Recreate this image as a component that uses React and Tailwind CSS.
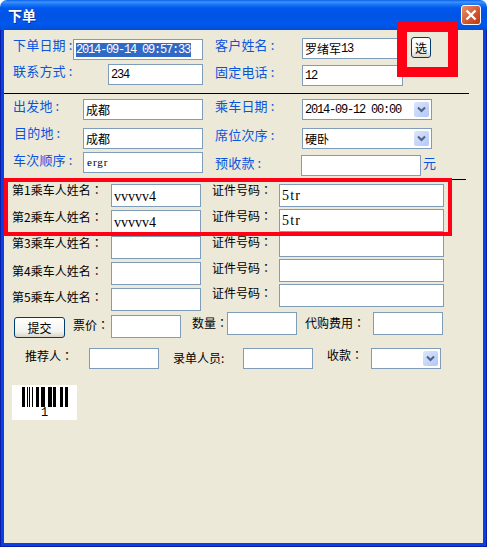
const cjk = "font-['Noto_Sans_CJK_SC','Noto_Sans_CJK_TC',sans-serif]";
const mono = "font-['Liberation_Mono','Noto_Sans_CJK_SC',monospace]";
const serif = "font-['Liberation_Serif','Noto_Sans_CJK_SC',serif]";

function Label({ children, className = "", colon = "：", blue = false }) {
  return (
    <div className={`shrink-0 whitespace-nowrap ${cjk} ${blue ? "text-[13px] text-[#0a55dc] tracking-[0.2px]" : "text-[12px] text-black"} leading-[16px] ${className}`}>
      {children}
      {blue ? (
        <span className="ml-[3px]">:</span>
      ) : (
        <span className="font-['Noto_Sans_CJK_TC',sans-serif]">{colon}</span>
      )}
    </div>
  );
}

function Box({ className = "", children }) {
  return (
    <div className={`shrink-0 bg-white border border-[#7f9db9] flex items-center pl-[2px] overflow-hidden whitespace-nowrap text-black ${className}`}>
      {children}
    </div>
  );
}

function Code({ children, className = "" }) {
  return <span className={`${mono} text-[12px] tracking-[-1.2px] ${className}`}>{children}</span>;
}

function Han({ children }) {
  return <span className={`${cjk} text-[12px]`}>{children}</span>;
}

function Select({ className = "", children }) {
  return (
    <Box className={`justify-between pr-[2px] ${className}`}>
      <span className="flex items-center">{children}</span>
      <div className="w-[15px] h-[15px] rounded-[2px] bg-[linear-gradient(135deg,#dce6fc,#b2c7f7)] flex items-center justify-center">
        <svg width="9" height="7" viewBox="0 0 9 7">
          <path d="M1 1.5 L4.5 5 L8 1.5" fill="none" stroke="#4d6185" strokeWidth="2" />
        </svg>
      </div>
    </Box>
  );
}

function XPButton({ className = "", children }) {
  return (
    <div className={`shrink-0 flex items-center justify-center border border-[#003c74] rounded-[3px] bg-[linear-gradient(180deg,#ffffff,#f4f3ee_70%,#d9d5c8)] ${cjk} text-[12px] text-black ${className}`}>
      {children}
    </div>
  );
}

const bars = [
  [0, 3], [5, 1], [7, 1], [10, 1], [14, 3], [19, 4], [26, 4], [31, 3], [38, 3], [43, 3],
];

const leftRows = [
  { n: 1, v: "vvvvv4", t: "-mt-[2px]" },
  { n: 2, v: "vvvvv4", t: "-mt-[1px]" },
  { n: 3, v: "", t: "-mt-[1px]" },
  { n: 4, v: "", t: "mt-[1px]" },
  { n: 5, v: "", t: "mt-[1px]" },
];
const rightRows = [
  { v: "5tr", t: "-mt-[2px]" },
  { v: "5tr", t: "-mt-[1px]" },
  { v: "", t: "mt-0" },
  { v: "", t: "mt-[1px]" },
  { v: "", t: "mt-[1px]" },
];

export default function App() {
  return (
    <div className="relative w-[487px] h-[547px] flex flex-col bg-white rounded-t-[7px] overflow-hidden">
      {/* title bar */}
      <div className="h-[30px] shrink-0 flex items-center justify-between pl-[8px] pr-[6px] bg-[linear-gradient(180deg,#0a5fe8_0px,#3d95ff_2px,#1f7bf5_4px,#0058ee_8px,#0054e3_16px,#0058f0_24px,#0050d8_29px)]">
        <span className={`${cjk} text-[14px] font-bold text-white [text-shadow:1px_1px_0_#0f2f8f]`}>下单</span>
        <div className="w-[20px] h-[20px] rounded-[3px] border border-white bg-[linear-gradient(135deg,#e8906c,#d2532c_60%,#bc3a12)] flex items-center justify-center">
          <svg width="12" height="12" viewBox="0 0 12 12">
            <path d="M1.5 1.5 L10.5 10.5 M10.5 1.5 L1.5 10.5" stroke="#fff" strokeWidth="2.4" />
          </svg>
        </div>
      </div>

      {/* frame + client */}
      <div className="flex-1 border-x border-b border-[#0a1fa8] flex flex-col">
        <div className="flex-1 border-x-[3px] border-b-[3px] border-[#0a3fe6] bg-[#ece9d8] flex flex-col">
          {/* row 1 */}
          <div className="flex items-start h-[34px] pl-[9px]">
            <Label blue className="w-[60px] mt-[7px]">下单日期</Label>
            <Box className="w-[130px] h-[21px] mt-[9px]">
              <Code className="bg-[#316ac5] text-white leading-[14px] pr-[1px]">2014-09-14 09:57:33</Code>
            </Box>
            <Label blue className="w-[87px] ml-[12px] mt-[7px]">客户姓名</Label>
            <Box className="w-[101px] h-[21px] mt-[8px]">
              <Han>罗绪军</Han><Code>13</Code>
            </Box>
            <XPButton className="w-[20px] h-[21px] ml-[8px] mt-[7px]">选</XPButton>
          </div>
          {/* row 2 */}
          <div className="flex items-start h-[29px] pl-[9px]">
            <Label blue className="w-[95px] mt-[-1px]">联系方式</Label>
            <Box className="w-[95px] h-[21px]"><Code>234</Code></Box>
            <Label blue className="w-[87px] ml-[12px]">固定电话</Label>
            <Box className="w-[101px] h-[21px] mt-[1px]"><Code>12</Code></Box>
          </div>
          <div className="h-px w-[465px] bg-black shrink-0" />
          {/* row 3 */}
          <div className="flex items-start h-[34px] pl-[9px]">
            <Label blue className="w-[70px] mt-[4px]">出发地</Label>
            <Box className="w-[120px] h-[21px] mt-[5px]"><Han>成都</Han></Box>
            <Label blue className="w-[87px] ml-[12px] mt-[4px]">乘车日期</Label>
            <Select className="w-[130px] h-[21px] mt-[5px]"><Code>2014-09-12 00:00</Code></Select>
          </div>
          {/* row 4 */}
          <div className="flex items-start h-[24px] pl-[9px]">
            <Label blue className="w-[70px] mt-[-3px] pl-[1px]">目的地</Label>
            <Box className="w-[120px] h-[21px]"><Han>成都</Han></Box>
            <Label blue className="w-[87px] ml-[12px] mt-[-1px]">席位次序</Label>
            <Select className="w-[130px] h-[21px]"><Han>硬卧</Han></Select>
          </div>
          {/* row 5 */}
          <div className="flex items-start h-[27px] pl-[9px]">
            <Label blue className="w-[70px]">车次顺序</Label>
            <Box className="w-[120px] h-[21px]">
              <span className={`${serif} text-[11px] tracking-[1px] pl-[1px]`}>ergr</span>
            </Box>
            <Label blue className="w-[86px] ml-[12px] mt-[3px]">预收款</Label>
            <Box className="w-[120px] h-[21px] mt-[3px]" />
            <span className={`${cjk} text-[13px] leading-[16px] text-[#0a55dc] ml-[2px] mt-[3px]`}>元</span>
          </div>
          <div className="h-px w-[462px] bg-black shrink-0" />

          {/* passengers */}
          <div className="flex items-start pt-[4px] h-[134px]">
            <div className="flex flex-col pl-[8px]">
              {leftRows.map((r) => (
                <div key={r.n} className="flex items-start h-[26px]">
                  <Label className={`w-[99px] ${r.t}`}>{`第${r.n}乘车人姓名`}</Label>
                  <Box className="w-[90px] h-[23px]">
                    {r.v && <span className={`${serif} text-[14px] tracking-[0px] pt-[2px]`}>{r.v}</span>}
                  </Box>
                </div>
              ))}
            </div>
            <div className="flex flex-col ml-[11px]">
              {rightRows.map((r, i) => (
                <div key={i} className="flex items-start h-[25px]">
                  <Label className={`w-[67px] ${r.t}`}>证件号码</Label>
                  <Box className="w-[165px] h-[23px]">
                    {r.v && <span className={`${serif} text-[14px] tracking-[1.2px]`}>{r.v}</span>}
                  </Box>
                </div>
              ))}
            </div>
          </div>

          {/* submit row */}
          <div className="flex items-start h-[34px] pl-[10px]">
            <XPButton className="w-[51px] h-[21px] mt-[3px]">提交</XPButton>
            <Label className="w-[38px] ml-[8px] mt-[3px]">票价</Label>
            <Box className="w-[70px] h-[23px] mt-[1px]" />
            <Label className="w-[35px] ml-[11px] mt-[1px]">数量</Label>
            <Box className="w-[70px] h-[23px] -mt-[2px]" />
            <Label className="w-[68px] ml-[8px] mt-[1px]">代购费用</Label>
            <Box className="w-[70px] h-[23px] -mt-[2px]" />
          </div>

          {/* referrer row */}
          <div className="flex items-start h-[37px] pl-[21px]">
            <Label className="w-[64px]">推荐人</Label>
            <Box className="w-[70px] h-[21px]" />
            <Label colon=":" className="w-[70px] ml-[14px] mt-[2px]">录单人员</Label>
            <Box className="w-[70px] h-[21px]" />
            <Label className="w-[44px] ml-[14px] -mt-[1px]">收款</Label>
            <Select className="w-[70px] h-[21px]" />
          </div>

          {/* barcode */}
          <div className="ml-[8px] w-[65px] h-[35px] bg-white flex flex-col items-center pt-[2px]">
            <svg width="46" height="20" viewBox="0 0 46 20" className="block shrink-0">
              {bars.map(([x, w]) => (
                <rect key={x} x={x} y="0" width={w} height="20" fill="#000" />
              ))}
            </svg>
            <span className={`${mono} text-[12px] leading-[13px] text-black`}>1</span>
          </div>
        </div>
      </div>

      {/* red annotation boxes */}
      <div className="absolute left-[397px] top-[22px] w-[61px] h-[55px] border-[10px] border-[#ff0014]" />
      <div className="absolute left-[4px] top-[178px] w-[448px] h-[58px] border-4 border-[#ff0014]" />
    </div>
  );
}
